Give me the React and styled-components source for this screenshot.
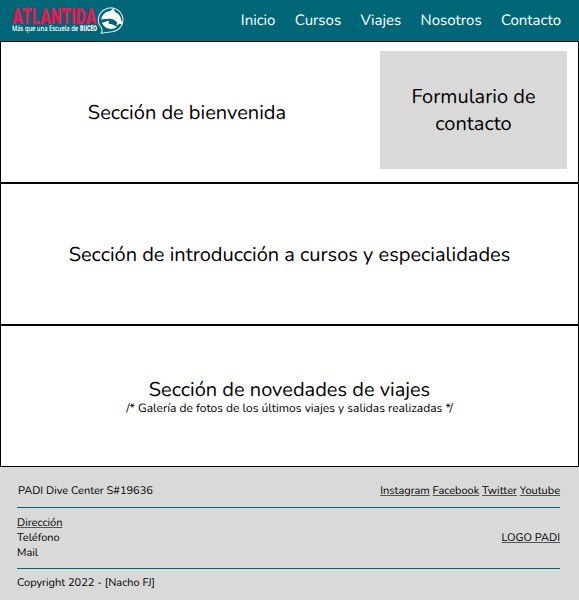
import React from "react";
import styled, { createGlobalStyle } from "styled-components";

const GlobalStyle = createGlobalStyle`
  * { box-sizing: border-box; }
  body {
    margin: 0;
    color: #000;
    background: #fff;
    font-family: Nunito, Lato, "Noto Sans", sans-serif;
    font-weight: 400;
    text-rendering: geometricPrecision;
  }
`;

const Page = styled.div`
  display: flex;
  flex-direction: column;
  height: 600px;
`;

const Header = styled.header`
  display: flex;
  justify-content: space-between;
  flex: 0 0 41px;
  padding: 0 18px 0 11px;
  background: #006778;
`;

const LogoMark = styled.svg`
  display: block;
  width: 115px;
  height: 30px;
  margin-top: 5px;
  overflow: visible;
`;

const Nav = styled.nav`
  display: flex;
  gap: 19.3px;
  padding-top: 10px;
`;

const NavLink = styled.a`
  color: #fff;
  font-size: 15px;
  line-height: 22px;
  white-space: nowrap;
`;

const Section = styled.section`
  display: flex;
  flex: 0 0 142px;
  flex-direction: column;
  align-items: center;
  justify-content: center;
  padding-top: 2px;
  border: 1px solid #000;
`;

const Welcome = styled(Section)`
  flex-direction: row;
  align-items: stretch;
  padding: 9px 11px 13px 0;
`;

const WelcomeText = styled.div`
  display: flex;
  flex: 1;
  align-items: center;
  justify-content: center;
  padding: 6px 7px 0 0;
`;

const Title = styled.h1`
  margin: 0;
  font-size: 20px;
  font-weight: inherit;
  line-height: 27px;
  text-align: center;
`;

const Note = styled.p`
  margin: -3px 0 0;
  font-size: 12px;
  line-height: 16px;
`;

const ContactForm = styled.aside`
  display: flex;
  flex: 0 0 187px;
  align-items: center;
  justify-content: center;
  padding: 2px 28px 0;
  background: #d9d9d9;
`;

const Footer = styled.footer`
  flex: 1;
  padding: 0 19px 0 17px;
  background: #d9d9d9;
  font-size: 11px;
  line-height: 15px;
`;

const FooterRow = styled.div`
  display: flex;
  align-items: center;
  justify-content: space-between;
  height: ${(p) => p.$height}px;
  padding: ${(p) => p.$pad || "0"};
  border-bottom: ${(p) => (p.$rule ? "1px solid #006778" : "0")};
`;

const Links = styled.div`
  display: flex;
  gap: 2.8px;
`;

const FooterText = styled.div`
  width: max-content;
`;

const FooterLink = styled(FooterText)`
  text-decoration: underline;
  text-decoration-color: #555;
  text-decoration-thickness: 1px;
  text-underline-offset: 1px;
`;

function Logo() {
  return (
    <LogoMark viewBox="0 0 115 30" role="img" aria-label="Atlantida">
      <g fontFamily="Roboto, sans-serif" fontWeight="900">
        <text x="1" y="18.5" fontSize="22" fill="#f5124f" textLength="84" lengthAdjust="spacingAndGlyphs">ATLANTIDA</text>
        <text x="1" y="26" fontFamily="Open Sans, sans-serif" fontSize="7.6" fontWeight="600" fill="#fff" textLength="66" lengthAdjust="spacingAndGlyphs">Más que una Escuela de</text>
        <text x="69" y="26" fontSize="8" fill="#fff" textLength="17" lengthAdjust="spacingAndGlyphs">BUCEO</text>
      </g>
      <path d="M90.2 22.5A12.3 11.9 0 1 1 101 26.7L90 28.3Q92 26 90.2 22.5Z" fill="#006778" stroke="#d5e8ea" strokeWidth="1.1" strokeLinejoin="round" />
      <path d="M90.2 14.5C91 9.5 95 5.8 99 6.2L102.5 3.6L104 7C108 8.5 110 12 110.3 15.5L112 19.5L108.5 18.8L105.5 21L106.2 17.4C104 14.5 102 14 99 13.7C96 13.4 93 14.2 90.2 14.5Z" fill="#fff" />
      <path d="M91 17.8C94 17 96 15.6 98.2 16L97.4 18.6L101.5 19.5L106 22C101 25.5 93.8 24.4 91 17.8Z" fill="#fff" />
    </LogoMark>
  );
}

const navItems = ["Inicio", "Cursos", "Viajes", "Nosotros", "Contacto"];
const socialLinks = ["Instagram", "Facebook", "Twitter", "Youtube"];

export default function App() {
  return (
    <>
      <GlobalStyle />
      <Page>
        <Header>
          <Logo />
          <Nav>
            {navItems.map((label) => (
              <NavLink key={label}>{label}</NavLink>
            ))}
          </Nav>
        </Header>
        <Welcome>
          <WelcomeText>
            <Title>Sección de bienvenida</Title>
          </WelcomeText>
          <ContactForm>
            <Title>Formulario de contacto</Title>
          </ContactForm>
        </Welcome>
        <Section>
          <Title>Sección de introducción a cursos y especialidades</Title>
        </Section>
        <Section>
          <Title>Sección de novedades de viajes</Title>
          <Note>/* Galería de fotos de los últimos viajes y salidas realizadas */</Note>
        </Section>
        <Footer>
          <FooterRow $height={41} $rule $pad="6px 0 0 1px">
            <FooterText>PADI Dive Center S#19636</FooterText>
            <Links>
              {socialLinks.map((label) => (
                <FooterLink key={label}>{label}</FooterLink>
              ))}
            </Links>
          </FooterRow>
          <FooterRow $height={61} $rule $pad="0 0 1px">
            <div>
              <FooterLink>Dirección</FooterLink>
              <FooterText>Teléfono</FooterText>
              <FooterText>Mail</FooterText>
            </div>
            <FooterLink>LOGO PADI</FooterLink>
          </FooterRow>
          <FooterRow $height={27}>
            <FooterText>Copyright 2022 - [Nacho FJ]</FooterText>
          </FooterRow>
        </Footer>
      </Page>
    </>
  );
}
